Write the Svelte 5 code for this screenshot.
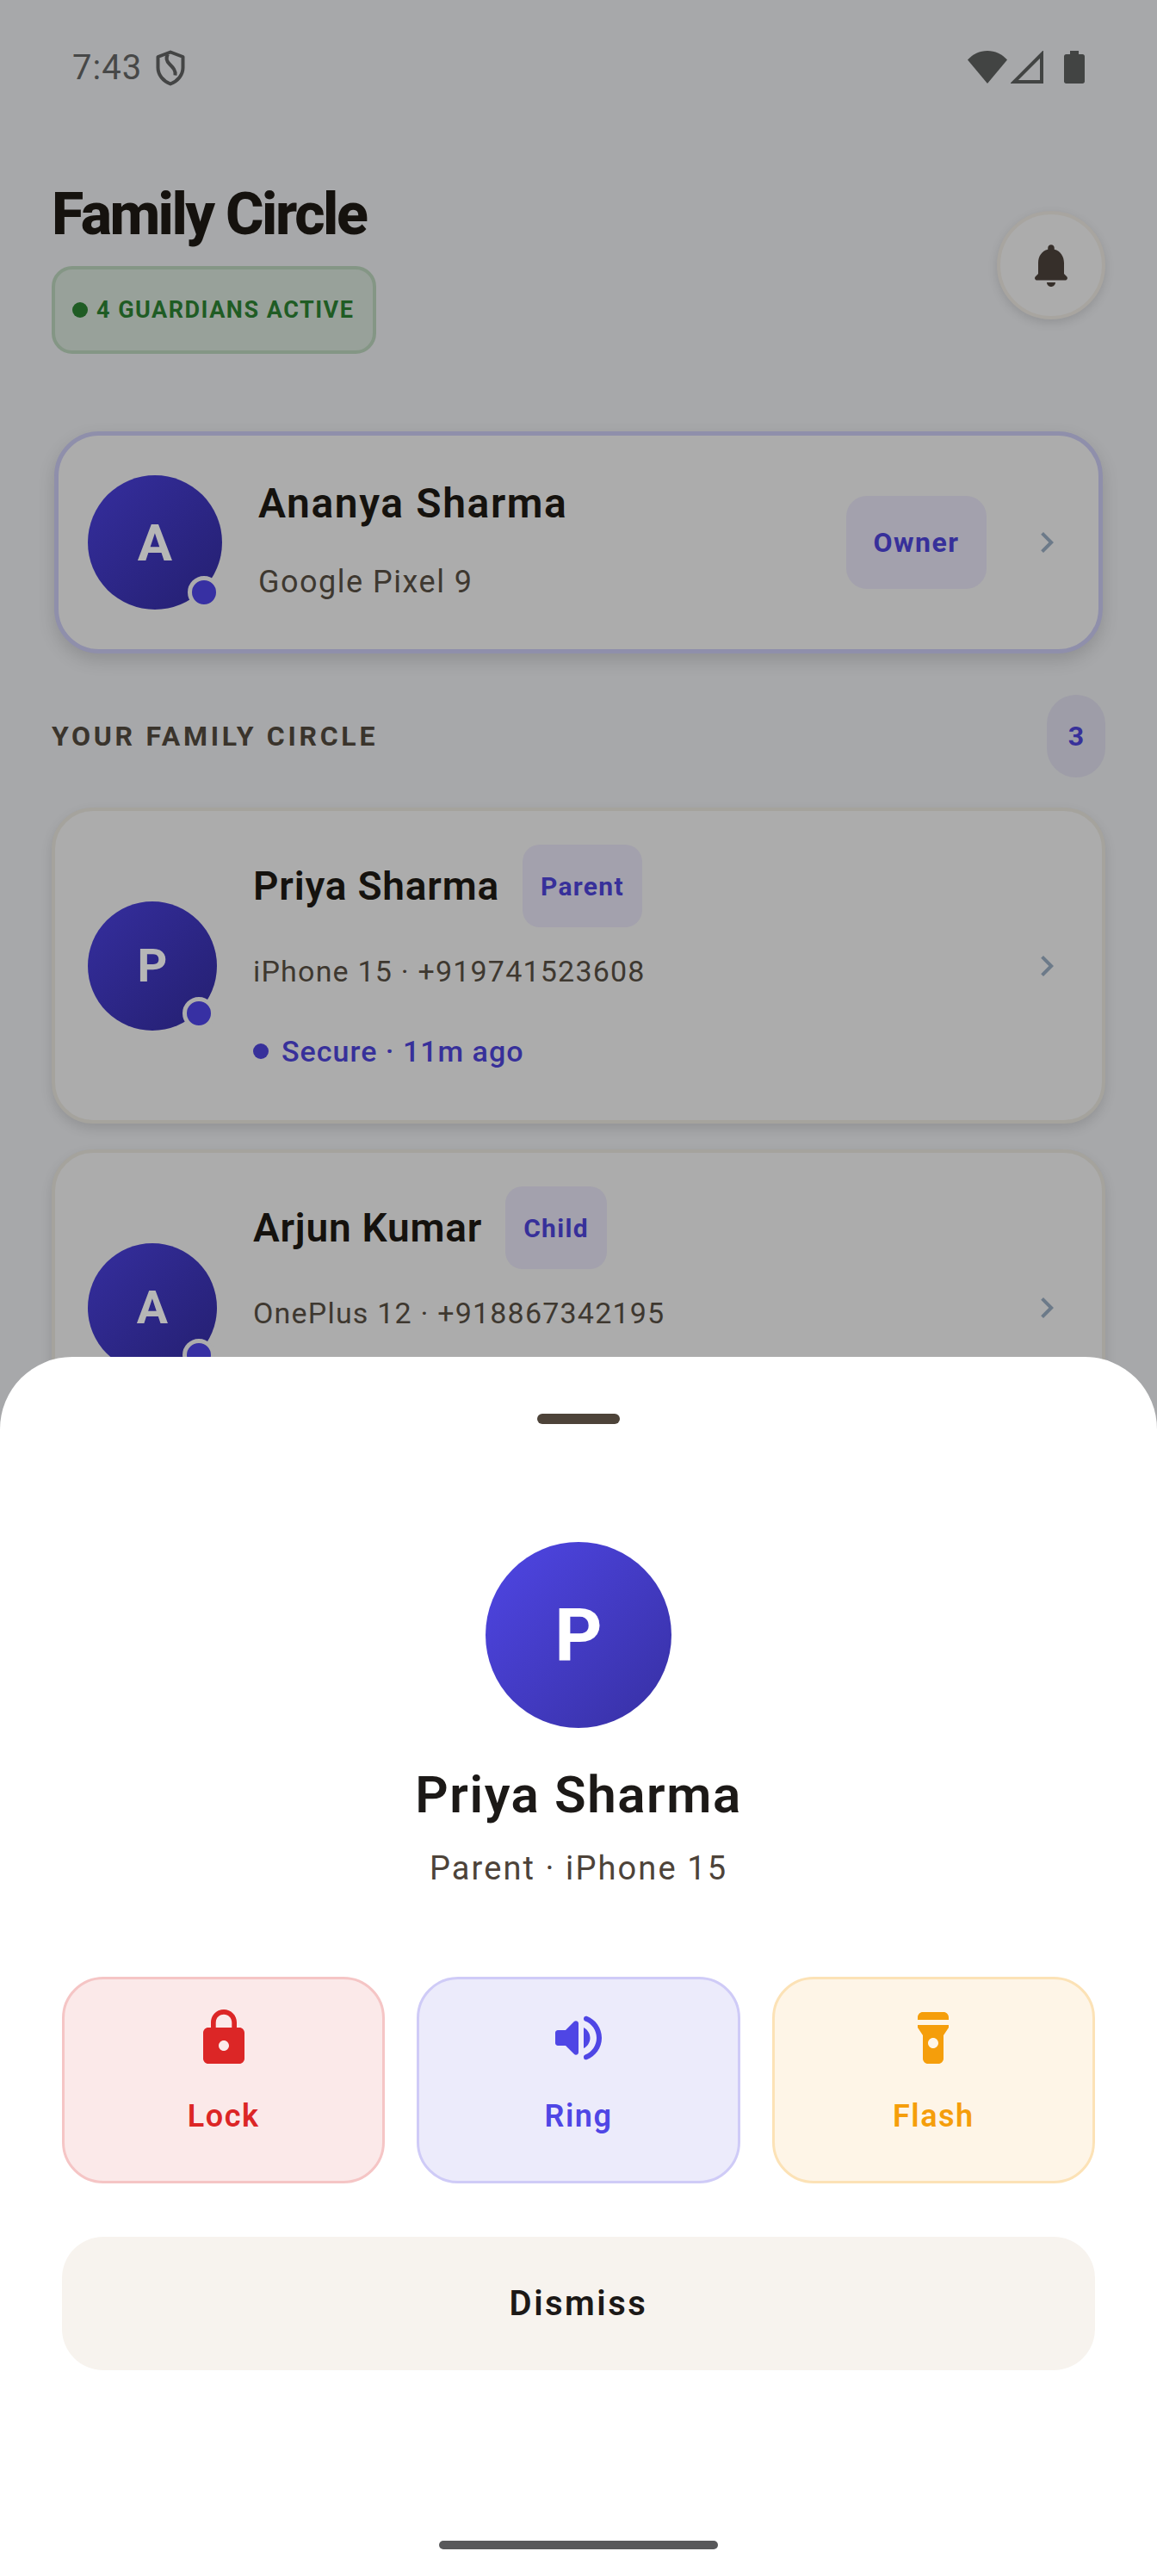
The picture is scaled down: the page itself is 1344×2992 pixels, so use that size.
<script>
	const members = [
		{ initial: 'P', name: 'Priya Sharma', role: 'Parent', detail: 'iPhone 15 · +919741523608', status: 'Secure · 11m ago' },
		{ initial: 'A', name: 'Arjun Kumar', role: 'Child', detail: 'OnePlus 12 · +918867342195', status: 'Secure · 2m ago' }
	];
</script>

<div class="page">
	<div class="status-bar">
		<div class="status-left">
			<span class="time">7:43</span>
			<svg class="shield" viewBox="0 0 34 42" width="34" height="42">
				<path d="M17 2.500 31.500 8v12.500c0 8.600-6 15.600-14.500 19-8.500-3.400-14.500-10.400-14.500-19V8z" fill="none" stroke="#444545" stroke-width="4" stroke-linejoin="round" />
				<path d="M13 4c-2.500 4-1.500 8 2 11.500 4 4 7.500 7.500 6.500 13" fill="none" stroke="#444545" stroke-width="4" transform="translate(1 1)" />
			</svg>
		</div>
		<div class="status-right">
			<svg viewBox="0 0 46 38" width="46" height="38"><path d="M0 10.500C6 4 14 0 23 0s17 4 23 10.500L23 38z" fill="#424443" /></svg>
			<svg viewBox="0 0 38 38" width="38" height="38"><path d="M36 4v32H4z" fill="none" stroke="#424443" stroke-width="4" stroke-linejoin="miter" /></svg>
			<svg class="battery" viewBox="0 0 24 38" width="24" height="38"><path d="M7 0h10v4h4.500c1.400 0 2.500 1.100 2.500 2.500v29c0 1.400-1.100 2.500-2.500 2.500h-19C1.100 38 0 36.900 0 35.500v-29C0 5.100 1.100 4 2.500 4H7z" fill="#424443" /></svg>
		</div>
	</div>

	<header class="header">
		<div>
			<h1>Family Circle</h1>
			<div class="active-badge"><span class="dot"></span>4 GUARDIANS ACTIVE</div>
		</div>
		<button class="bell">
			<svg viewBox="0 0 24 24" width="60" height="60"><path d="M12 22c1.100 0 2-.9 2-2h-4c0 1.100.9 2 2 2zm6-6v-5c0-3.070-1.630-5.640-4.500-6.320V4c0-.83-.67-1.500-1.500-1.500s-1.500.67-1.500 1.500v.68C7.640 5.360 6 7.920 6 11v5l-1.290 1.290c-.63.63-.19 1.710.7 1.710h13.170c.89 0 1.340-1.080.71-1.710L18 16z" fill="#362f2a" /></svg>
		</button>
	</header>

	<div class="owner-card">
		<div class="avatar owner-avatar">A<span class="presence"></span></div>
		<div class="owner-info">
			<div class="name owner-name">Ananya Sharma</div>
			<div class="detail owner-detail">Google Pixel 9</div>
		</div>
		<span class="chip owner-chip">Owner</span>
		<svg class="chevron" viewBox="0 0 24 24" width="48" height="48"><path d="M10 6 8.590 7.410 13.170 12l-4.580 4.590L10 18l6-6z" fill="#6c7a89" /></svg>
	</div>

	<div class="section-head">
		<span class="section-label">YOUR FAMILY CIRCLE</span>
		<span class="count">3</span>
	</div>

	{#each members as m}
		<div class="card">
			<div class="avatar">{m.initial}<span class="presence"></span></div>
			<div class="info">
				<div class="name-row">
					<span class="name">{m.name}</span>
					<span class="chip">{m.role}</span>
				</div>
				<div class="detail">{m.detail}</div>
				<div class="secure"><span class="secure-dot"></span>{m.status}</div>
			</div>
			<svg class="chevron" viewBox="0 0 24 24" width="48" height="48"><path d="M10 6 8.590 7.410 13.170 12l-4.580 4.590L10 18l6-6z" fill="#6c7a89" /></svg>
		</div>
	{/each}

	<!-- bottom sheet -->
	<div class="sheet">
		<div class="handle"></div>
		<div class="sheet-avatar">P</div>
		<div class="sheet-name">Priya Sharma</div>
		<div class="sheet-sub">Parent · iPhone 15</div>

		<div class="actions">
			<button class="action lock">
				<svg viewBox="0 0 24 24" width="72" height="72"><path d="M18 8h-1V6c0-2.760-2.240-5-5-5S7 3.240 7 6v2H6c-1.100 0-2 .9-2 2v10c0 1.100.9 2 2 2h12c1.100 0 2-.9 2-2V10c0-1.100-.9-2-2-2zm-6 9c-1.100 0-2-.9-2-2s.9-2 2-2 2 .9 2 2-.9 2-2 2zm3.100-9H8.900V6c0-1.710 1.390-3.100 3.100-3.100 1.710 0 3.100 1.390 3.100 3.100v2z" fill="currentColor" /></svg>
				<span>Lock</span>
			</button>
			<button class="action ring">
				<svg viewBox="0 0 24 24" width="72" height="72"><path d="M3 10v4c0 .55.45 1 1 1h3l3.290 3.290c.63.63 1.710.18 1.710-.71V6.410c0-.89-1.080-1.340-1.710-.71L7 9H4c-.55 0-1 .45-1 1zm13.500 2c0-1.770-1.020-3.290-2.500-4.030v8.050c1.480-.73 2.500-2.250 2.500-4.020zM14 4.450v.2c0 .38.25.71.6.85C17.180 6.530 19 9.060 19 12s-1.820 5.470-4.400 6.500c-.36.14-.6.47-.6.85v.2c0 .63.63 1.070 1.210.84C18.600 19.110 21 15.840 21 12s-2.400-7.110-5.790-8.390c-.58-.23-1.210.22-1.210.84z" fill="currentColor" /></svg>
				<span>Ring</span>
			</button>
			<button class="action flash">
				<svg viewBox="0 0 24 24" width="72" height="72"><path d="M6 4v1h12V4c0-1.100-.9-2-2-2H8c-1.100 0-2 .9-2 2zm0 3v1l2 3v9c0 1.100.9 2 2 2h4c1.100 0 2-.9 2-2v-9l2-3V7H6zm6 9c-1.100 0-2-.9-2-2s.9-2 2-2 2 .9 2 2-.9 2-2 2z" fill="currentColor" /></svg>
				<span>Flash</span>
			</button>
		</div>

		<button class="dismiss">Dismiss</button>
		<div class="home-bar"></div>
	</div>
</div>

<style>
	:global(body) {
		margin: 0;
		background: #a7a8aa;
	}

	.page {
		position: relative;
		width: 1344px;
		height: 2992px;
		overflow: hidden;
		padding: 0 60px;
		box-sizing: border-box;
		background: #a7a8aa;
		font-family: Roboto, 'Liberation Sans', sans-serif;
		color: #15120e;
	}

	button {
		font-family: inherit;
		padding: 0;
		cursor: pointer;
	}

	.status-bar {
		display: flex;
		justify-content: space-between;
		align-items: center;
		height: 156px;
		padding: 0 24px;
	}

	.status-left {
		display: flex;
		align-items: center;
		gap: 16px;
		margin-top: 2px;
	}

	.time {
		font-size: 40px;
		line-height: 48px;
		letter-spacing: 1px;
		color: #474848;
	}

	.status-right {
		display: flex;
		align-items: center;
		gap: 4px;
	}

	.battery {
		margin-left: 20px;
	}

	.header {
		display: flex;
		justify-content: space-between;
		align-items: center;
		padding-top: 55px;
		margin-bottom: 90px;
	}

	h1 {
		margin: 0 0 22px;
		font-size: 68px;
		line-height: 76px;
		font-weight: 800;
		letter-spacing: -2.500px;
	}

	.active-badge {
		display: flex;
		align-items: center;
		box-sizing: border-box;
		width: 377px;
		height: 102px;
		padding-left: 20px;
		border: 4px solid #849685;
		border-radius: 24px;
		background: #98a19a;
		color: #1f5c24;
		font-size: 27px;
		font-weight: 700;
		letter-spacing: 1.500px;
	}

	.dot {
		width: 18px;
		height: 18px;
		border-radius: 50%;
		background: #1f5c24;
		margin-right: 10px;
	}

	.bell {
		display: flex;
		align-items: center;
		justify-content: center;
		width: 126px;
		height: 126px;
		margin-bottom: 6px;
		box-sizing: border-box;
		border: 4px solid #a8a5a0;
		border-radius: 50%;
		background: #acacac;
		box-shadow: 0 4px 12px rgba(0, 0, 0, 0.12);
	}

	.owner-card {
		display: flex;
		align-items: center;
		box-sizing: border-box;
		height: 258px;
		margin: 0 3px;
		padding: 0 36px 0 34px;
		border: 5px solid #8f8fab;
		border-radius: 52px;
		background: #acacac;
		box-shadow: 0 8px 20px rgba(0, 0, 0, 0.14);
	}

	.avatar {
		position: relative;
		display: flex;
		align-items: center;
		justify-content: center;
		flex: none;
		width: 150px;
		height: 150px;
		border-radius: 50%;
		background: linear-gradient(135deg, #352e9e, #241f70);
		color: #b6b6b6;
		font-size: 54px;
		font-weight: 700;
	}

	.owner-avatar {
		width: 156px;
		height: 156px;
		font-size: 60px;
	}

	.presence {
		position: absolute;
		right: 2px;
		bottom: 1px;
		width: 28px;
		height: 28px;
		border: 5px solid #acacac;
		border-radius: 50%;
		background: #3730a3;
	}

	.owner-info {
		flex: 1;
		margin-left: 42px;
		margin-top: -6px;
	}

	.name {
		font-size: 46px;
		line-height: 56px;
		font-weight: 600;
		letter-spacing: 0.800px;
	}

	.owner-name {
		font-size: 48px;
		letter-spacing: 1.600px;
	}

	.detail {
		font-size: 34px;
		line-height: 44px;
		color: #3e3830;
		letter-spacing: 1.200px;
	}

	.owner-detail {
		margin-top: 41px;
		font-size: 36px;
		letter-spacing: 1.500px;
	}

	.chip {
		display: inline-flex;
		align-items: center;
		justify-content: center;
		box-sizing: border-box;
		height: 96px;
		padding: 0 21px;
		border-radius: 20px;
		background: #a3a1ad;
		color: #37309a;
		font-size: 30px;
		font-weight: 700;
		letter-spacing: 1.300px;
	}

	.owner-chip {
		width: 163px;
		height: 108px;
		margin-right: 46px;
		font-size: 32px;
		letter-spacing: 1.500px;
		border-radius: 24px;
	}

	.chevron {
		flex: none;
	}

	.section-head {
		display: flex;
		justify-content: space-between;
		align-items: center;
		margin-top: 48px;
	}

	.section-label {
		font-size: 32px;
		font-weight: 700;
		letter-spacing: 3.700px;
		color: #3a342c;
	}

	.count {
		display: flex;
		align-items: center;
		justify-content: center;
		width: 68px;
		height: 96px;
		border-radius: 34px;
		background: #9e9da8;
		color: #37309a;
		font-size: 32px;
		font-weight: 700;
	}

	.card {
		display: flex;
		align-items: center;
		box-sizing: border-box;
		height: 367px;
		margin-top: 30px;
		padding: 0 40px 0 38px;
		border: 4px solid #a5a39d;
		border-radius: 48px;
		background: #acacac;
		box-shadow: 0 6px 14px rgba(0, 0, 0, 0.12);
	}

	.section-head + .card {
		margin-top: 35px;
	}

	.info {
		flex: 1;
		margin-left: 42px;
		padding-bottom: 19px;
	}

	.name-row {
		display: flex;
		align-items: center;
		gap: 27px;
	}

	.info .detail {
		margin-top: 29px;
	}

	.secure {
		display: flex;
		align-items: center;
		margin-top: 49px;
		font-size: 34px;
		line-height: 44px;
		font-weight: 500;
		color: #37309a;
		letter-spacing: 1px;
	}

	.secure-dot {
		width: 18px;
		height: 18px;
		margin-right: 15px;
		border-radius: 50%;
		background: #37309a;
	}

	.sheet {
		position: absolute;
		left: 0;
		right: 0;
		bottom: 0;
		height: 1416px;
		display: flex;
		flex-direction: column;
		align-items: center;
		box-sizing: border-box;
		padding: 66px 72px 31px;
		border-radius: 84px 84px 0 0;
		background: #fff;
	}

	.handle {
		width: 96px;
		height: 12px;
		border-radius: 6px;
		background: #4d4339;
	}

	.sheet-avatar {
		display: flex;
		align-items: center;
		justify-content: center;
		width: 216px;
		height: 216px;
		margin-top: 137px;
		border-radius: 50%;
		background: linear-gradient(135deg, #4f46e5, #3730a3);
		color: #fff;
		font-size: 86px;
		font-weight: 700;
	}

	.sheet-name {
		margin-top: 43px;
		font-size: 60px;
		line-height: 70px;
		font-weight: 600;
		letter-spacing: 1.600px;
		color: #1c1917;
	}

	.sheet-sub {
		margin-top: 27px;
		font-size: 38px;
		line-height: 46px;
		letter-spacing: 2.100px;
		color: #4d4339;
	}

	.actions {
		display: grid;
		grid-template-columns: repeat(3, 1fr);
		gap: 37px;
		width: 100%;
		margin-top: 103px;
	}

	.action {
		display: flex;
		flex-direction: column;
		align-items: center;
		box-sizing: border-box;
		height: 240px;
		padding-top: 32px;
		border: 3px solid;
		border-radius: 48px;
		font-size: 36px;
		font-weight: 600;
		letter-spacing: 1.500px;
	}

	.action span {
		margin-top: 32px;
		line-height: 46px;
	}

	.lock {
		background: #fbe9e9;
		border-color: #f5c5c5;
		color: #dc2626;
	}

	.ring {
		background: #ecebfb;
		border-color: #cfcbf7;
		color: #4f46e5;
	}

	.flash {
		background: #fef5e7;
		border-color: #fce2b6;
		color: #f59e0b;
	}

	.dismiss {
		width: 100%;
		height: 155px;
		margin-top: 62px;
		border: none;
		border-radius: 48px;
		background: #f7f3ee;
		color: #1c1917;
		font-size: 40px;
		font-weight: 600;
		letter-spacing: 2.500px;
	}

	.home-bar {
		width: 324px;
		height: 10px;
		margin-top: auto;
		border-radius: 5px;
		background: #58585a;
	}
</style>
